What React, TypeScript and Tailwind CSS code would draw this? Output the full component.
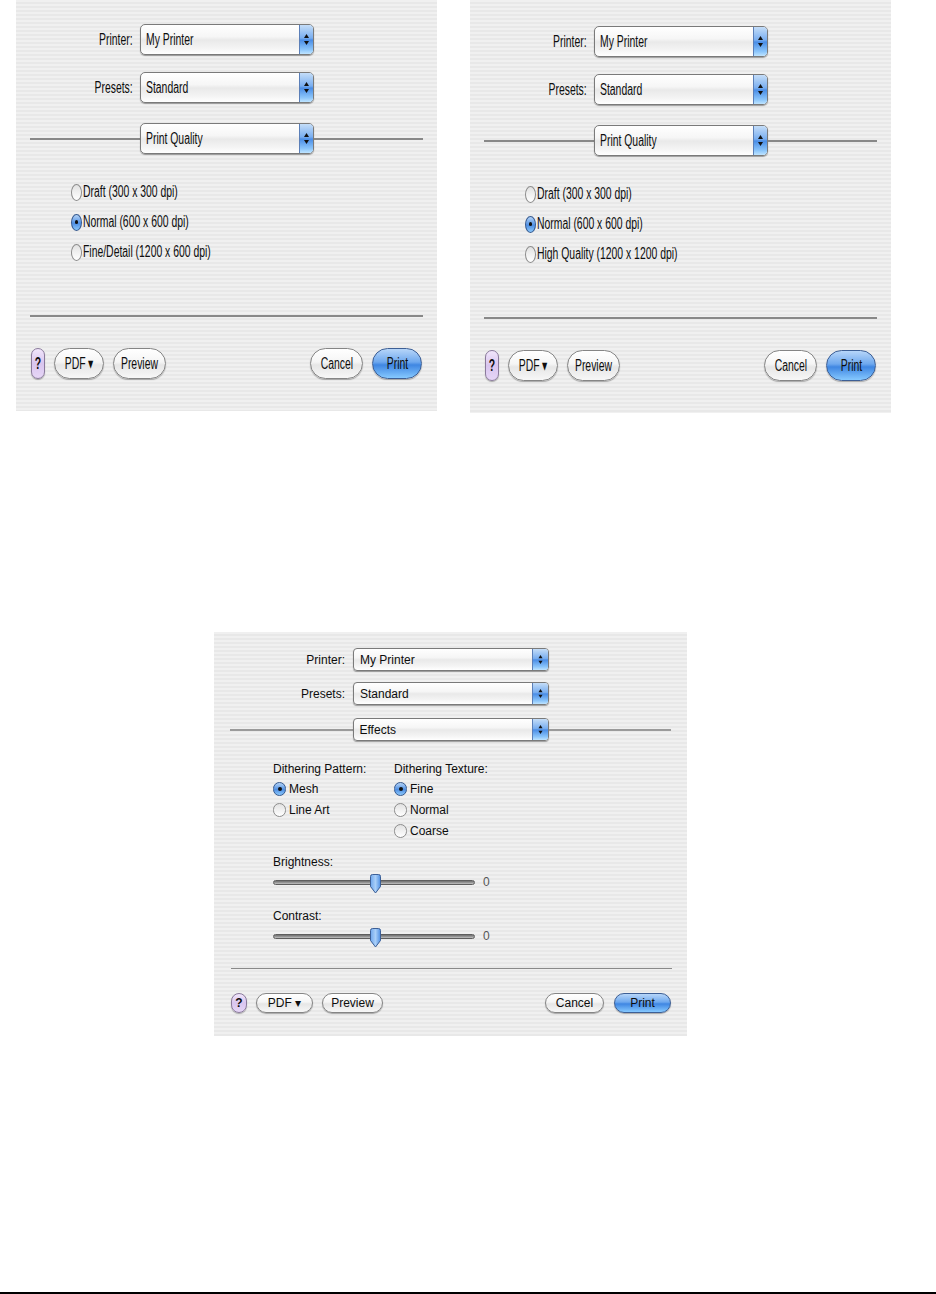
import type { ReactNode } from 'react';

const stripes =
  'bg-[repeating-linear-gradient(to_bottom,#f0f0f0_0px,#f0f0f0_2px,#e8e8e8_2px,#e8e8e8_4px)]';
const popupBg =
  'bg-[linear-gradient(to_bottom,#ffffff_0%,#f6f6f6_40%,#e9e9e9_52%,#f4f4f4_80%,#ffffff_100%)]';
const stepperBg =
  'bg-[linear-gradient(to_bottom,#c4ddf8_0%,#79aef0_45%,#4a8de6_52%,#8cc6fb_85%,#bfe4ff_100%)]';
const whiteBtn =
  'bg-[linear-gradient(to_bottom,#ffffff_0%,#f5f5f5_45%,#e6e6e6_55%,#f7f7f7_100%)] border-[#858585]';
const blueBtn =
  'bg-[linear-gradient(to_bottom,#b7d6f9_0%,#6ea8ee_45%,#3f86e2_55%,#86c9ff_100%)] border-[#3d5f95]';
const helpBtn =
  'bg-[linear-gradient(to_bottom,#f1e6fb_0%,#d9c5ef_50%,#e6d6f6_100%)] border-[#8a7a9c] font-bold';

// the first two shots are squeezed sideways, so their text is too
function Sq({ children, origin = 'left' }: { children: ReactNode; origin?: 'left' | 'right' | 'center' }) {
  const o = { left: 'origin-left', right: 'origin-right', center: 'origin-center' }[origin];
  return <span className={`inline-block scale-x-[0.65] whitespace-nowrap ${o}`}>{children}</span>;
}

function Arrows({ small }: { small?: boolean }) {
  return (
    <svg width="5" height={small ? 9 : 11} viewBox="0 0 5 11" className="fill-[#111]">
      <path d="M0 4 L2.5 0 L5 4 Z" />
      <path d="M0 7 L5 7 L2.5 11 Z" />
    </svg>
  );
}

function BigPopup({ label, className = '' }: { label: string; className?: string }) {
  return (
    <div
      className={`flex h-[31px] w-[174px] items-center overflow-hidden rounded-[5px] border border-[#7a7a7a] shadow-[0_1px_1px_rgba(0,0,0,0.35)] ${popupBg} ${className}`}
    >
      <div className="flex-1 pl-[5px] text-[16px] leading-none">
        <Sq>{label}</Sq>
      </div>
      <div className={`flex w-[14px] items-center justify-center self-stretch border-l border-[#5b7fb8] ${stepperBg}`}>
        <Arrows />
      </div>
    </div>
  );
}

function SmallPopup({ label, className = '' }: { label: string; className?: string }) {
  return (
    <div
      className={`flex h-[23px] w-[196px] items-center overflow-hidden rounded-[4px] border border-[#7a7a7a] shadow-[0_1px_1px_rgba(0,0,0,0.35)] ${popupBg} ${className}`}
    >
      <div className="flex-1 pl-[6px] text-[12px] leading-none">{label}</div>
      <div className={`flex w-[16px] items-center justify-center self-stretch border-l border-[#5b7fb8] ${stepperBg}`}>
        <Arrows small />
      </div>
    </div>
  );
}

function BigRadio({ on }: { on?: boolean }) {
  return (
    <span
      className={`flex h-[17px] w-[11px] items-center justify-center rounded-[50%] border ${
        on
          ? 'border-[#35598f] bg-[linear-gradient(to_bottom,#b5d4f7,#4f8fe3_55%,#8cc8fb)]'
          : 'border-[#8c8c8c] bg-[linear-gradient(to_bottom,#e2e2e2,#ffffff)]'
      }`}
    >
      {on && <span className="h-[4px] w-[3px] rounded-full bg-[#111]" />}
    </span>
  );
}

function SmallRadio({ on }: { on?: boolean }) {
  return (
    <span
      className={`flex h-[14px] w-[13px] items-center justify-center rounded-full border ${
        on
          ? 'border-[#35598f] bg-[linear-gradient(to_bottom,#b5d4f7,#4f8fe3_55%,#8cc8fb)]'
          : 'border-[#8c8c8c] bg-[linear-gradient(to_bottom,#e2e2e2,#ffffff)]'
      }`}
    >
      {on && <span className="h-[4px] w-[4px] rounded-full bg-[#111]" />}
    </span>
  );
}

function BigButton({ label, w, tone }: { label: string; w: string; tone: string }) {
  return (
    <div
      className={`flex h-[31px] items-center justify-center rounded-full border text-[16px] leading-none shadow-[0_1px_1px_rgba(0,0,0,0.3)] ${tone} ${w}`}
    >
      <Sq origin="center">{label}</Sq>
    </div>
  );
}

function SmallButton({ label, w, tone }: { label: string; w: string; tone: string }) {
  return (
    <div
      className={`flex h-[20px] items-center justify-center rounded-full border text-[12px] leading-none shadow-[0_1px_1px_rgba(0,0,0,0.3)] ${tone} ${w}`}
    >
      {label}
    </div>
  );
}

function QualityPanel({ third, className }: { third: string; className: string }) {
  const rows = [
    { text: 'Draft (300 x 300 dpi)', on: false },
    { text: 'Normal (600 x 600 dpi)', on: true },
    { text: third, on: false },
  ];
  return (
    <div className={`flex w-[421px] flex-col ${stripes} ${className}`}>
      <div className="flex items-center">
        <div className="w-[117px] text-right text-[16px] leading-none">
          <Sq origin="right">Printer:</Sq>
        </div>
        <BigPopup label="My Printer" className="ml-[7px]" />
      </div>
      <div className="mt-[17px] flex items-center">
        <div className="w-[117px] text-right text-[16px] leading-none">
          <Sq origin="right">Presets:</Sq>
        </div>
        <BigPopup label="Standard" className="ml-[7px]" />
      </div>
      <div className="mt-[20px] flex items-center px-[14px]">
        <div className="h-[2px] flex-1 bg-[#888888]" />
        <BigPopup label="Print Quality" />
        <div className="h-[2px] flex-1 bg-[#888888]" />
      </div>
      <div className="mt-[23px] flex flex-col pl-[55px]">
        {rows.map((r) => (
          <div key={r.text} className="flex h-[30px] items-center gap-[1px] text-[16px] leading-none">
            <BigRadio on={r.on} />
            <Sq>{r.text}</Sq>
          </div>
        ))}
      </div>
      <div className="mx-[14px] mt-[48px] h-[2px] bg-[#888888]" />
      <div className="mt-[31px] flex items-center justify-between px-[15px]">
        <div className="flex items-center gap-[9px]">
          <BigButton label="?" w="w-[14px]" tone={helpBtn} />
          <BigButton label="PDF ▾" w="w-[50px]" tone={whiteBtn} />
          <BigButton label="Preview" w="w-[53px]" tone={whiteBtn} />
        </div>
        <div className="flex items-center gap-[9px]">
          <BigButton label="Cancel" w="w-[53px]" tone={whiteBtn} />
          <BigButton label="Print" w="w-[50px]" tone={blueBtn} />
        </div>
      </div>
    </div>
  );
}

function Slider({ label, className }: { label: string; className: string }) {
  return (
    <div className={className}>
      <div className="flex h-[18px] items-center">{label}</div>
      <div className="mt-[1px] flex h-[20px] items-center">
        <div className="relative h-[5px] w-[202px] rounded-full border border-[#5e5e5e] bg-[linear-gradient(to_bottom,#6f6f6f,#9c9c9c_60%,#c4c4c4)]">
          <svg width="13" height="20" viewBox="0 0 13 20" className="absolute left-[95px] top-[-7px]">
            <defs>
              <linearGradient id={`thumb-${label}`} x1="0" y1="0" x2="1" y2="0">
                <stop offset="0" stopColor="#6fa6ec" />
                <stop offset="0.5" stopColor="#a9cff8" />
                <stop offset="1" stopColor="#4f8fe3" />
              </linearGradient>
            </defs>
            <path
              d="M1.5 2.5 Q1.5 0.5 3.5 0.5 H9.5 Q11.5 0.5 11.5 2.5 V12.5 L6.5 19 L1.5 12.5 Z"
              fill={`url(#thumb-${label})`}
              stroke="#3c5f96"
            />
          </svg>
        </div>
        <span className="ml-[8px] text-[#555]">0</span>
      </div>
    </div>
  );
}

function EffectsPanel() {
  const radio = (text: string, on?: boolean) => (
    <div key={text} className="flex h-[21px] items-center gap-[3px]">
      <SmallRadio on={on} />
      <span>{text}</span>
    </div>
  );
  return (
    <div className={`flex h-[404px] w-[473px] flex-col pt-[16px] text-[12px] leading-none ${stripes}`}>
      <div className="flex items-center">
        <div className="w-[131px] text-right">Printer:</div>
        <SmallPopup label="My Printer" className="ml-[8px]" />
      </div>
      <div className="mt-[11px] flex items-center">
        <div className="w-[131px] text-right">Presets:</div>
        <SmallPopup label="Standard" className="ml-[8px]" />
      </div>
      <div className="mt-[13px] flex items-center px-[16px]">
        <div className="h-[2px] flex-1 bg-[#9a9a9a]" />
        <SmallPopup label="Effects" />
        <div className="h-[2px] flex-1 bg-[#9a9a9a]" />
      </div>
      <div className="mt-[19px] flex pl-[59px]">
        <div className="w-[121px]">
          <div className="flex h-[18px] items-center">Dithering Pattern:</div>
          {radio('Mesh', true)}
          {radio('Line Art')}
        </div>
        <div>
          <div className="flex h-[18px] items-center">Dithering Texture:</div>
          {radio('Fine', true)}
          {radio('Normal')}
          {radio('Coarse')}
        </div>
      </div>
      <Slider label="Brightness:" className="mt-[12px] pl-[59px]" />
      <Slider label="Contrast:" className="mt-[15px] pl-[59px]" />
      <div className="ml-[17px] mr-[15px] mt-[22px] h-px bg-[#8a8a8a]" />
      <div className="mt-[24px] flex items-center justify-between pl-[17px] pr-[16px]">
        <div className="flex items-center gap-[9px]">
          <SmallButton label="?" w="w-[16px]" tone={helpBtn} />
          <SmallButton label="PDF ▾" w="w-[57px]" tone={whiteBtn} />
          <SmallButton label="Preview" w="w-[61px]" tone={whiteBtn} />
        </div>
        <div className="flex items-center gap-[10px]">
          <SmallButton label="Cancel" w="w-[59px]" tone={whiteBtn} />
          <SmallButton label="Print" w="w-[57px]" tone={blueBtn} />
        </div>
      </div>
    </div>
  );
}

export default function App() {
  return (
    <div className="flex h-[1294px] w-[936px] flex-col bg-white font-['Liberation_Sans',Arial,sans-serif] text-[#0d0d0d]">
      <div className="flex items-start pl-[16px]">
        <QualityPanel third="Fine/Detail (1200 x 600 dpi)" className="h-[411px] pt-[24px]" />
        <QualityPanel third="High Quality (1200 x 1200 dpi)" className="ml-[33px] h-[413px] pt-[26px]" />
      </div>
      <div className="ml-[214px] mt-[219px]">
        <EffectsPanel />
      </div>
      <div className="mt-auto h-[2px] bg-black" />
    </div>
  );
}
